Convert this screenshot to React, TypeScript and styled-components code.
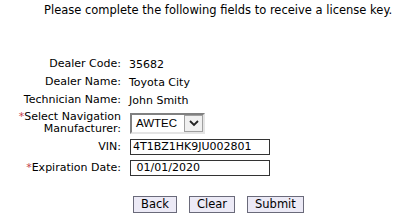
import React from 'react'
import styled, { createGlobalStyle } from 'styled-components'

const GlobalStyle = createGlobalStyle`
  html, body {
    margin: 0;
    padding: 0;
    background: #ffffff;
  }
  body {
    font-family: 'DejaVu Sans', Verdana, sans-serif;
    font-size: 11px;
    color: #000000;
  }
`

const Page = styled.div`
  width: 406px;
  height: 217px;
  padding-top: 3px;
  box-sizing: border-box;
  overflow: hidden;
`

const Heading = styled.div`
  padding-left: 44px;
  font-size: 11.5px;
  line-height: 14px;
  white-space: nowrap;
`

const Form = styled.div`
  margin-top: 38px;
  display: grid;
  grid-template-columns: 121px auto;
  column-gap: 8px;
  align-items: center;
`

const Label = styled.div<{ $h?: number }>`
  text-align: right;
  line-height: 12px;
  height: ${({ $h }) => $h ?? 18}px;
  display: flex;
  flex-direction: column;
  justify-content: center;
  align-items: flex-end;
  white-space: nowrap;
`

const Value = styled.div<{ $h?: number }>`
  height: ${({ $h }) => $h ?? 18}px;
  display: flex;
  align-items: center;
  white-space: nowrap;
`

const Req = styled.span`
  color: #c4404a;
`

const SelectBox = styled.div`
  width: 75px;
  height: 21px;
  margin-left: 1px;
  box-sizing: border-box;
  border: 2px solid;
  border-color: #808080 #e4e4e4 #e4e4e4 #808080;
  display: flex;
  align-items: center;
  justify-content: space-between;
  background: #fff;
  font-family: 'Liberation Sans', Arial, sans-serif;
  font-size: 11.5px;
  padding-left: 4px;
`

const DropButton = styled.div`
  width: 19px;
  height: 17px;
  box-sizing: border-box;
  border: 1px solid #a0a0a0;
  background: #f0f0f0;
  display: flex;
  align-items: center;
  justify-content: center;
`

const TextInput = styled.div`
  width: 140px;
  height: 16px;
  margin-left: 1px;
  box-sizing: border-box;
  border: 1px solid #333;
  padding-left: 2px;
  line-height: 14px;
  font-size: 11px;
`

const Buttons = styled.div`
  margin-top: 18px;
  padding-left: 133px;
  display: flex;
  gap: 12px;
`

const Button = styled.button`
  font-family: 'DejaVu Sans', Verdana, sans-serif;
  font-size: 11.5px;
  height: 17px;
  padding: 0 7px;
  line-height: 15px;
  background: #eceaf6;
  border: 1px solid #6a6a7a;
  color: #000;
  border-radius: 0;
`

export default function App() {
  return (
    <Page>
      <GlobalStyle />
      <Heading>Please complete the following fields to receive a license key.</Heading>
      <Form>
        <Label>Dealer Code:</Label>
        <Value>35682</Value>
        <Label>Dealer Name:</Label>
        <Value>Toyota City</Value>
        <Label>Technician Name:</Label>
        <Value>John Smith</Value>
        <Label $h={28}>
          <span>
            <Req>*</Req>Select Navigation
          </span>
          <span>Manufacturer:</span>
        </Label>
        <Value $h={28}>
          <SelectBox>
            <span>AWTEC</span>
            <DropButton>
              <svg width="10" height="7" viewBox="0 0 10 7">
                <path d="M1 1 L5 5 L9 1" fill="none" stroke="#222" strokeWidth="1.8" />
              </svg>
            </DropButton>
          </SelectBox>
        </Value>
        <Label $h={20}>VIN:</Label>
        <Value $h={20}>
          <TextInput>4T1BZ1HK9JU002801</TextInput>
        </Value>
        <Label $h={21}>
          <span>
            <Req>*</Req>Expiration Date:
          </span>
        </Label>
        <Value $h={21}>
          <TextInput>&nbsp;01/01/2020</TextInput>
        </Value>
      </Form>
      <Buttons>
        <Button>Back</Button>
        <Button>Clear</Button>
        <Button>Submit</Button>
      </Buttons>
    </Page>
  )
}
